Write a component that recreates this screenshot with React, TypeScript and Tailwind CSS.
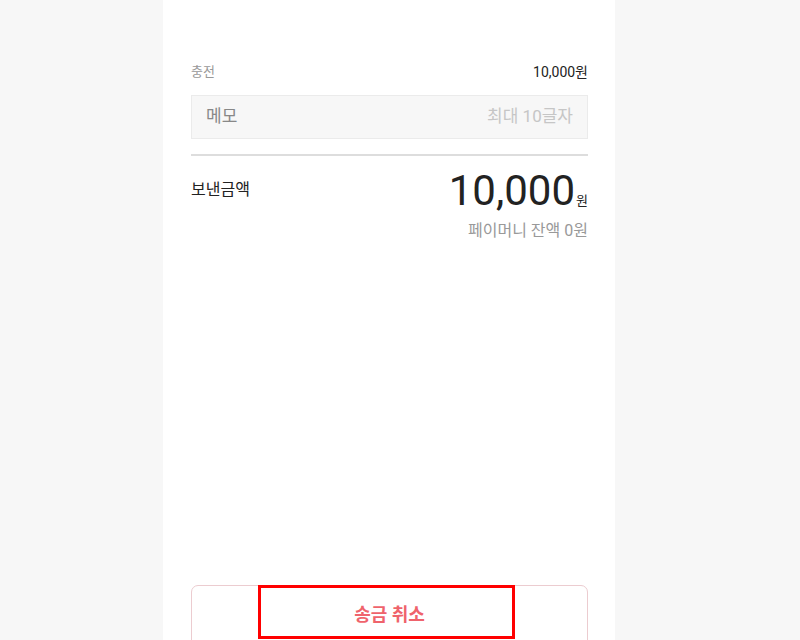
export default function App() {
  const font = { fontFamily: "Roboto, 'Noto Sans CJK KR', sans-serif" };
  return (
    <div className="relative h-[640px] w-[800px] overflow-hidden bg-[#f7f7f7]" style={font}>
      <div className="ml-[163px] flex h-[640px] w-[452px] flex-col bg-white pl-[28px] pr-[27px] pt-[62px]">
        <div className="flex h-[20px] items-center justify-between">
          <span className="text-[13px] text-[#999999]">충전</span>
          <span className="text-[14px] text-[#222222]">10,000원</span>
        </div>
        <div className="mt-[13px] flex h-[44px] items-center justify-between border border-[#ebebeb] bg-[#f7f7f7] pl-[14px] pr-[14px]">
          <span className="text-[17px] text-[#888888]">메모</span>
          <span className="text-[17px] text-[#c6c6c6]">최대 10글자</span>
        </div>
        <div className="mt-[15px] h-[2px] bg-[#dddddd]" />
        <div className="mt-[11px] flex items-start justify-between">
          <span className="mt-[11px] text-[16px] text-[#222222]">보낸금액</span>
          <div className="flex items-baseline">
            <span className="text-[42px] leading-[48px] text-[#222222]">10,000</span>
            <span className="ml-[1px] text-[13px] text-[#222222]">원</span>
          </div>
        </div>
        <div className="mt-[5px] text-right text-[16px] leading-[22px] text-[#999999]">페이머니 잔액 0원</div>
        <div className="flex-1" />
        <div className="mb-[-10px] flex h-[65px] items-start justify-center rounded-[7px] border border-[#ecccd0] pt-[15px]">
          <span className="text-[18px] font-bold text-[#ef636c]">송금 취소</span>
        </div>
      </div>
      <div className="absolute left-[258px] top-[585px] h-[54px] w-[257px] border-[3px] border-[#ff0000]" />
    </div>
  );
}
